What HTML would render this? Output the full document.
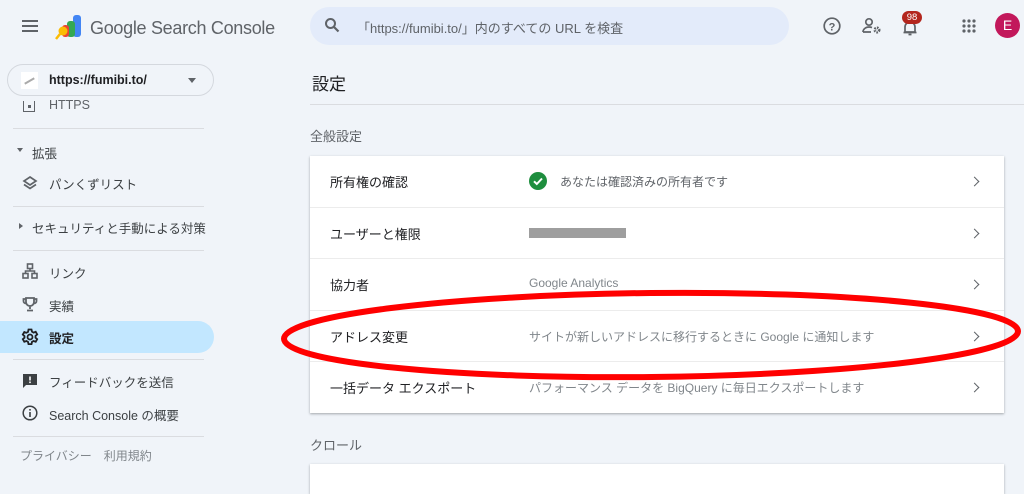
<!DOCTYPE html>
<html><head><meta charset="utf-8"><style>
*{margin:0;padding:0;box-sizing:border-box}
body{width:1024px;height:474px;overflow:hidden;background:#f0f4f9;font-family:"Liberation Sans","Noto Sans CJK JP",sans-serif;position:relative;color:#3c4043}
.a{position:absolute}
.nav{font-size:12.5px;color:#3c4043}
.hr{position:absolute;height:1px;background:#dadce0}
.card{position:absolute;left:310px;width:694px;background:#fff;box-shadow:0 1px 2px rgba(60,64,67,.3),0 1px 3px rgba(60,64,67,.15)}
.row{position:absolute;left:0;width:694px;height:51px;border-top:1px solid #ececec}
.row .t{position:absolute;left:20px;top:16px;font-size:13px;color:#202124}
.row .d{position:absolute;left:219px;top:17px;font-size:12px;color:#80868b}
.row .c{position:absolute;right:26px;top:22px;width:7px;height:7px;border-right:1.6px solid #5f6368;border-top:1.6px solid #5f6368;transform:rotate(45deg)}
</style></head><body>
<div class="a" style="left:22px;top:20px;width:16px;height:2px;background:#5f6368;box-shadow:0 5px 0 #5f6368,0 10px 0 #5f6368"></div>
<svg class="a" style="left:54px;top:14px" width="30" height="26" viewBox="0 0 30 26">
<rect x="19" y="1" width="8" height="22" rx="3" fill="#4285f4"/><rect x="13" y="7" width="8" height="16" rx="3" fill="#34a853"/>
<rect x="8" y="11" width="7" height="12" rx="3" fill="#ea4335"/><circle cx="9" cy="17" r="4.5" fill="#fbbc04"/><path d="M6 20 L2 25" stroke="#fbbc04" stroke-width="2.5"/></svg>
<div class="a" style="left:90px;top:18px;font-size:18px;color:#5f6368;letter-spacing:-0.3px">Google Search Console</div>
<div class="a" style="left:310px;top:7px;width:479px;height:38px;border-radius:19px;background:#e3ebfa"></div>
<svg class="a" style="left:324px;top:17px" width="16" height="16" viewBox="0 0 16 16"><circle cx="6.5" cy="6.5" r="4.5" fill="none" stroke="#5f6368" stroke-width="2"/><path d="M10 10l4.5 4.5" stroke="#5f6368" stroke-width="2.2"/></svg>
<div class="a" style="left:357px;top:18px;font-size:13px;color:#5f6368">「https://fumibi.to/」内のすべての URL を検査</div>
<svg class="a" style="left:823px;top:17px" width="18" height="18" viewBox="0 0 18 18"><circle cx="9" cy="9" r="7.8" fill="none" stroke="#5f6368" stroke-width="1.7"/><text x="9" y="13.3" font-size="11" font-weight="bold" text-anchor="middle" fill="#5f6368" font-family="Liberation Sans">?</text></svg>
<svg class="a" style="left:862px;top:17px" width="20" height="18" viewBox="0 0 20 18"><circle cx="7" cy="5" r="3.2" fill="none" stroke="#5f6368" stroke-width="1.7"/><path d="M1 15c0-3 3-5 6-5 1 0 2 .2 3 .6M1 15h8" fill="none" stroke="#5f6368" stroke-width="1.7"/><circle cx="15" cy="13" r="2.2" fill="none" stroke="#5f6368" stroke-width="2.6" stroke-dasharray="1.5 1"/></svg>
<svg class="a" style="left:902px;top:20px" width="16" height="16" viewBox="0 0 16 16"><path d="M3 12V7a5 5 0 0 1 10 0v5zM1.5 12.5h13M6.5 14.5h3" fill="none" stroke="#5f6368" stroke-width="1.7"/></svg>
<div class="a" style="left:902px;top:11px;width:20px;height:13px;border-radius:7px;background:#b3261e;color:#fff;font-size:9.5px;text-align:center;line-height:13px">98</div>
<svg class="a" style="left:962px;top:19px" width="14" height="14" viewBox="0 0 14 14" fill="#5f6368"><circle cx="2" cy="2" r="1.6"/><circle cx="7" cy="2" r="1.6"/><circle cx="12" cy="2" r="1.6"/><circle cx="2" cy="7" r="1.6"/><circle cx="7" cy="7" r="1.6"/><circle cx="12" cy="7" r="1.6"/><circle cx="2" cy="12" r="1.6"/><circle cx="7" cy="12" r="1.6"/><circle cx="12" cy="12" r="1.6"/></svg>
<div class="a" style="left:995px;top:13px;width:25px;height:25px;border-radius:50%;background:#c2185b;color:#fff;font-size:14px;text-align:center;line-height:25px">E</div>
<div class="a" style="left:7px;top:64px;width:207px;height:32px;border:1px solid #d4d8de;border-radius:16px"></div>
<div class="a" style="left:21px;top:72px;width:17px;height:17px;background:#fff"></div>
<div class="a" style="left:24px;top:80px;width:11px;height:2px;background:#aaa;transform:rotate(-30deg)"></div>
<div class="a" style="left:49px;top:73px;font-size:12.5px;color:#202124;font-weight:bold">https://fumibi.to/</div>
<div class="a" style="left:188px;top:78px;border:4px solid transparent;border-top:5px solid #5f6368"></div>
<div class="a" style="left:23px;top:101px;width:12px;height:11px;border:1.6px solid #5f6368;border-top:none"></div>
<div class="a" style="left:28px;top:105px;width:3px;height:3px;background:#5f6368"></div>
<div class="a nav" style="left:49px;top:98px;color:#5f6368">HTTPS</div>
<div class="hr" style="left:13px;top:128px;width:191px"></div>
<div class="a" style="left:17px;top:148px;border:3.5px solid transparent;border-top:4px solid #5f6368"></div>
<div class="a nav" style="left:32px;top:143px">拡張</div>
<svg class="a" style="left:22px;top:175px" width="16" height="16" viewBox="0 0 16 16"><path d="M8 2l6 4-6 4-6-4zM2 9.5l6 4 6-4" fill="none" stroke="#5f6368" stroke-width="1.7"/></svg>
<div class="a nav" style="left:49px;top:174px">パンくずリスト</div>
<div class="hr" style="left:13px;top:206px;width:191px"></div>
<div class="a" style="left:19px;top:223px;border:3.5px solid transparent;border-left:4px solid #5f6368"></div>
<div class="a nav" style="left:32px;top:218px">セキュリティと手動による対策</div>
<div class="hr" style="left:13px;top:250px;width:191px"></div>
<svg class="a" style="left:22px;top:263px" width="16" height="16" viewBox="0 0 16 16" fill="none" stroke="#5f6368" stroke-width="1.6"><rect x="5.5" y="1" width="5" height="4.5"/><rect x="1" y="10.5" width="5" height="4.5"/><rect x="10" y="10.5" width="5" height="4.5"/><path d="M8 5.5v2.5M3.5 10.5V8h9v2.5"/></svg>
<div class="a nav" style="left:49px;top:263px">リンク</div>
<svg class="a" style="left:22px;top:296px" width="16" height="16" viewBox="0 0 16 16" fill="none" stroke="#5f6368" stroke-width="1.8"><path d="M4 2h8v4a4 4 0 0 1-8 0zM4 3H1.5v2a2.5 2.5 0 0 0 2.5 2.5M12 3h2.5v2A2.5 2.5 0 0 1 12 7.5M8 10v3M5 14.5h6"/></svg>
<div class="a nav" style="left:49px;top:296px">実績</div>
<div class="a" style="left:0;top:321px;width:214px;height:32px;border-radius:0 16px 16px 0;background:#c2e7ff"></div>
<svg class="a" style="left:21px;top:328px" width="18" height="18" viewBox="0 0 18 18" fill="none" stroke="#202124" stroke-width="1.8"><circle cx="9" cy="9" r="2.5"/><path d="M7.5 1.5h3l.5 2.2 1.6.9 2.1-.8 1.5 2.6-1.7 1.5v1.8l1.7 1.5-1.5 2.6-2.1-.8-1.6.9-.5 2.2h-3l-.5-2.2-1.6-.9-2.1.8-1.5-2.6 1.7-1.5V8.1L1.8 6.6l1.5-2.6 2.1.8 1.6-.9z"/></svg>
<div class="a nav" style="left:49px;top:328px;color:#202124;font-weight:bold">設定</div>
<div class="hr" style="left:13px;top:359px;width:191px"></div>
<svg class="a" style="left:22px;top:373px" width="16" height="16" viewBox="0 0 16 16"><path d="M1 1h14v11H4l-3 3z" fill="#3c4043"/><rect x="7.2" y="3.5" width="1.6" height="4" fill="#fff"/><rect x="7.2" y="8.5" width="1.6" height="1.6" fill="#fff"/></svg>
<div class="a nav" style="left:49px;top:372px">フィードバックを送信</div>
<svg class="a" style="left:22px;top:405px" width="16" height="16" viewBox="0 0 16 16"><circle cx="8" cy="8" r="6.8" fill="none" stroke="#3c4043" stroke-width="1.5"/><rect x="7.2" y="7" width="1.6" height="5" fill="#3c4043"/><rect x="7.2" y="4" width="1.6" height="1.6" fill="#3c4043"/></svg>
<div class="a nav" style="left:49px;top:405px">Search Console の概要</div>
<div class="hr" style="left:13px;top:436px;width:191px"></div>
<div class="a nav" style="left:20px;top:447px;color:#80868b;font-size:12px">プライバシー　利用規約</div>
<div class="a" style="left:312px;top:70px;font-size:17px;color:#202124">設定</div>
<div class="hr" style="left:310px;top:104px;width:714px"></div>
<div class="a" style="left:310px;top:126px;font-size:13px;color:#5f6368">全般設定</div>
<div class="card" style="top:156px;height:257px">
<div class="row" style="top:0;border-top:none"><div class="t">所有権の確認</div>
<svg class="a" style="left:219px;top:16px" width="18" height="18" viewBox="0 0 18 18"><circle cx="9" cy="9" r="9" fill="#1e8e3e"/><path d="M5 9.3l2.8 2.7L13 6.5" fill="none" stroke="#fff" stroke-width="2"/></svg>
<div class="d" style="left:250px;color:#5f6368">あなたは確認済みの所有者です</div><div class="c"></div></div>
<div class="row" style="top:51px"><div class="t">ユーザーと権限</div><div class="a" style="left:219px;top:20px;width:97px;height:10px;background:#9e9e9e"></div><div class="c"></div></div>
<div class="row" style="top:102px"><div class="t">協力者</div><div class="d">Google Analytics</div><div class="c"></div></div>
<div class="row" style="top:154px"><div class="t">アドレス変更</div><div class="d">サイトが新しいアドレスに移行するときに Google に通知します</div><div class="c"></div></div>
<div class="row" style="top:205px"><div class="t">一括データ エクスポート</div><div class="d">パフォーマンス データを BigQuery に毎日エクスポートします</div><div class="c"></div></div>
</div>
<div class="a" style="left:310px;top:435px;font-size:13px;color:#5f6368">クロール</div>
<div class="card" style="top:464px;height:30px"></div>
<svg class="a" style="left:0;top:0" width="1024" height="474"><ellipse cx="651" cy="335" rx="367" ry="42" fill="none" stroke="#f00" stroke-width="6" transform="rotate(-0.6 651 335)"/></svg>
</body></html>
